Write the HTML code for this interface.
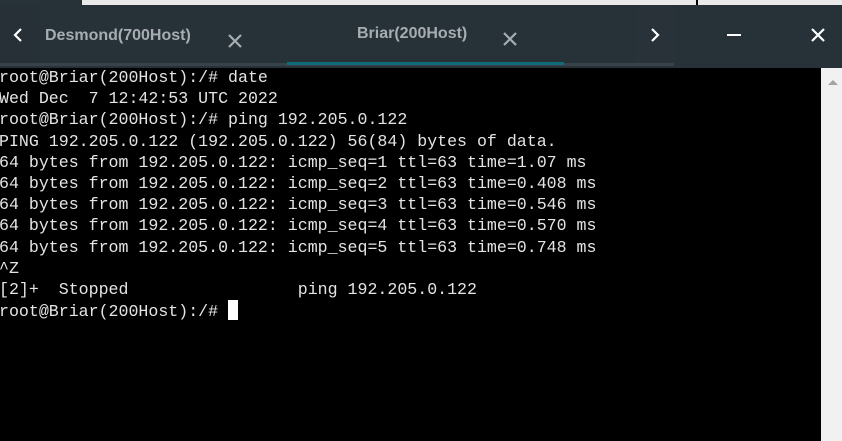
<!DOCTYPE html>
<html><head><style>
*{margin:0;padding:0;box-sizing:border-box}
body{width:842px;height:441px;overflow:hidden;background:#000;position:relative;font-family:"Liberation Sans",sans-serif}
.top{position:absolute;left:0;top:0;width:842px;height:5px;background:#e9e9e9}
.topd{position:absolute;left:0;top:0;width:82px;height:5px;background:#263238}
.bar{position:absolute;left:0;top:5px;width:842px;height:63px;background:#263238}
.l{position:absolute;left:0;top:5px;width:40px;height:58px;background:#263036}
.tabline{position:absolute;left:0;top:63px;width:674px;height:3px;background:#37424a}
.act{position:absolute;left:287px;top:62px;width:277px;height:3px;background:#0f6b78}
.t{position:absolute;color:#a7adb1;font-weight:bold;font-size:16px}
.term{position:absolute;left:-1px;top:67px;font-family:"Liberation Mono",monospace;font-size:16.6px;line-height:21.2px;color:#e4e4e4;white-space:pre}
.cur{display:inline-block;width:10px;height:20px;background:#fff;vertical-align:-4px}
.sb{position:absolute;left:821px;top:68px;width:21px;height:373px;background:#f1f1f1}
.arr{position:absolute;left:828px;top:80px;width:0;height:0;border-left:5px solid transparent;border-right:5px solid transparent;border-bottom:5px solid #a3a3a3}
</style></head><body>
<div class="top"></div><div class="topd"></div>
<div style="position:absolute;left:696px;top:0;width:2px;height:5px;background:#000"></div>
<div class="bar"></div><div class="l"></div>
<div style="position:absolute;left:636px;top:5px;width:38px;height:58px;background:#283238"></div>
<div class="tabline"></div><div class="act"></div>
<svg style="position:absolute;left:12px;top:27px" width="12" height="16"><path d="M9 2 L3 8 L9 14" stroke="#fff" stroke-width="2.2" fill="none"/></svg>
<div class="t" style="left:45px;top:27px">Desmond(700Host)</div>
<svg style="position:absolute;left:227px;top:33px" width="16" height="16"><path d="M2 2L14 14M14 2L2 14" stroke="#a7adb1" stroke-width="2.2"/></svg>
<div class="t" style="left:357px;top:25px">Briar(200Host)</div>
<svg style="position:absolute;left:502px;top:31px" width="16" height="16"><path d="M2 2L14 14M14 2L2 14" stroke="#a7adb1" stroke-width="2.2"/></svg>
<svg style="position:absolute;left:649px;top:27px" width="12" height="16"><path d="M3 2 L9 8 L3 14" stroke="#fff" stroke-width="2.2" fill="none"/></svg>
<div style="position:absolute;left:727px;top:34px;width:14px;height:2px;background:#fff"></div>
<svg style="position:absolute;left:810px;top:27px" width="16" height="16"><path d="M2 2L14 14M14 2L2 14" stroke="#fff" stroke-width="2.2"/></svg>
<div class="term">root@Briar(200Host):/# date
Wed Dec  7 12:42:53 UTC 2022
root@Briar(200Host):/# ping 192.205.0.122
PING 192.205.0.122 (192.205.0.122) 56(84) bytes of data.
64 bytes from 192.205.0.122: icmp_seq=1 ttl=63 time=1.07 ms
64 bytes from 192.205.0.122: icmp_seq=2 ttl=63 time=0.408 ms
64 bytes from 192.205.0.122: icmp_seq=3 ttl=63 time=0.546 ms
64 bytes from 192.205.0.122: icmp_seq=4 ttl=63 time=0.570 ms
64 bytes from 192.205.0.122: icmp_seq=5 ttl=63 time=0.748 ms
^Z
[2]+  Stopped                 ping 192.205.0.122
root@Briar(200Host):/# <span class="cur"></span></div>
<div class="sb"></div><div class="arr"></div>
</body></html>
